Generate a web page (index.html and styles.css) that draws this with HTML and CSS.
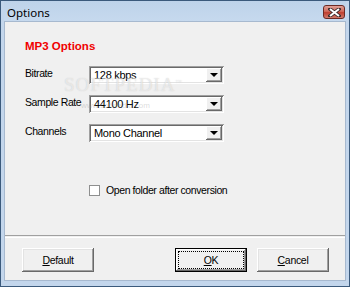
FILE: index.html
```html
<!DOCTYPE html>
<html lang="en">
<head>
    <meta charset="UTF-8">
    <meta name="viewport" content="width=device-width, initial-scale=1.0">
    <title>Options</title>
    <link rel="stylesheet" href="styles.css">
</head>
<body>
    <div class="window">
        <div class="titlebar">
            <span class="title">Options</span>
            <button class="close-btn" aria-label="Close">
                <svg width="13" height="9" viewBox="0 0 13 9">
                    <path d="M2 1 L11 8 M11 1 L2 8" stroke="#3a2a2a" stroke-width="3.6" stroke-linecap="square"/>
                    <path d="M2 1 L11 8 M11 1 L2 8" stroke="#fff" stroke-width="2"/>
                </svg>
            </button>
        </div>

        <div class="client">
            <!-- filigrane du site de capture -->
            <div class="watermark">SOFTPEDIA<sup>™</sup></div>
            <div class="watermark-url">www.softpedia.com</div>

            <h1>MP3 Options</h1>

            <div class="field-row">
                <span class="field-label">Bitrate</span>
                <div class="combo"><span class="combo-value">128 kbps</span><span class="combo-btn"></span></div>
            </div>
            <div class="field-row">
                <span class="field-label">Sample Rate</span>
                <div class="combo"><span class="combo-value">44100 Hz</span><span class="combo-btn"></span></div>
            </div>
            <div class="field-row">
                <span class="field-label">Channels</span>
                <div class="combo"><span class="combo-value">Mono Channel</span><span class="combo-btn"></span></div>
            </div>

            <label class="check-row">
                <span class="checkbox"></span>
                Open folder after conversion
            </label>

            <div class="separator"></div>

            <div class="button-row">
                <button class="btn"><u>D</u>efault</button>
                <span class="spacer"></span>
                <button class="btn btn-default"><span class="focus-rect"><u>O</u>K</span></button>
                <button class="btn"><u>C</u>ancel</button>
            </div>
        </div>
    </div>
</body>
</html>
```

FILE: styles.css
```css
body {
    margin: 0;
    width: 350px;
    height: 287px;
    overflow: hidden;
    font-family: 'Liberation Sans', Arial, sans-serif;
    font-size: 10.5px;
    letter-spacing: -0.4px;
    color: #000;
}
.window {
    width: 350px;
    height: 287px;
    box-sizing: border-box;
    border: 1px solid #3b5a7c;
    background: #c3d6ec;
    padding: 0 3px 5px 3px;
    display: flex;
    flex-direction: column;
}
.titlebar {
    height: 20px;
    display: flex;
    align-items: center;
    justify-content: space-between;
    background: linear-gradient(#bed3ea, #c6d9ee);
}
.title {
    font-family: 'Noto Sans', 'DejaVu Sans', sans-serif;
    font-size: 11.5px;
    letter-spacing: 0;
    color: #000;
    padding-left: 3px;
    margin-top: 2px;
}
.close-btn {
    width: 22px;
    height: 14px;
    margin: 2px 1px 0 0;
    padding: 0;
    border: 1px solid #6d2a24;
    border-radius: 3px;
    background: linear-gradient(#e0a197 0%, #d0685a 45%, #bf3f30 55%, #d07a6c 100%);
    display: flex;
    align-items: center;
    justify-content: center;
}
.client {
    flex: 1;
    position: relative;
    background: #f0f0f0;
    border: 1px solid #a7b9cf;
    padding: 17px 0 0 0;
    display: flex;
    flex-direction: column;
}
h1 {
    margin: 0 0 0 20px;
    color: #f00000;
    font-size: 11.5px;
    font-weight: bold;
    letter-spacing: 0;
    line-height: 14px;
}
.field-row {
    display: flex;
    align-items: center;
    margin: 13px 0 0 20px;
    height: 17px;
}
.field-row + .field-row {
    margin-top: 12px;
}
.field-label {
    width: 64px;
    margin-top: -3px;
    white-space: nowrap;
}
.combo {
    width: 135px;
    height: 18px;
    box-sizing: border-box;
    background: #fff;
    box-shadow: inset 1px 1px #a0a0a0, inset -1px -1px #fff, inset 2px 2px #696969, inset -2px -2px #e3e3e3;
    display: flex;
    align-items: center;
    padding: 2px;
}
.combo-value {
    flex: 1;
    padding-left: 3px;
    font-size: 11px;
    letter-spacing: -0.3px;
}
.combo-btn {
    width: 16px;
    height: 14px;
    box-sizing: border-box;
    background: #f0f0f0;
    box-shadow: inset -1px -1px #696969, inset 1px 1px #fff, inset -2px -2px #a0a0a0;
    display: flex;
    align-items: center;
    justify-content: center;
}
.combo-btn::after {
    content: "";
    border-left: 4px solid transparent;
    border-right: 4px solid transparent;
    border-top: 4px solid #000;
    margin: 1px 1px 0 0;
}
.check-row {
    display: flex;
    align-items: center;
    gap: 6px;
    margin: 43px 0 0 84px;
    height: 12px;
}
.checkbox {
    width: 11px;
    height: 11px;
    box-sizing: border-box;
    background: #fff;
    border: 1px solid #8e8f8f;
}
.separator {
    margin-top: 39px;
    height: 1px;
    border-top: 1px solid #a0a0a0;
    border-bottom: 1px solid #fff;
}
.button-row {
    display: flex;
    margin: 10px 16px 0 17px;
    gap: 10px;
}
.spacer {
    flex: 1;
}
.btn {
    width: 72px;
    height: 24px;
    padding: 0;
    border: none;
    background: #f0f0f0;
    font-family: 'Liberation Sans', Arial, sans-serif;
    font-size: 10.5px;
    letter-spacing: -0.3px;
    color: #000;
    box-shadow: inset -1px -1px #696969, inset 1px 1px #fff, inset -2px -2px #a0a0a0, inset 2px 2px #e3e3e3;
}
.btn-default {
    box-shadow: inset 0 0 0 1px #000, inset -2px -2px #696969, inset 2px 2px #fff, inset -3px -3px #a0a0a0;
    display: flex;
    padding: 4px;
}
.focus-rect {
    flex: 1;
    display: flex;
    align-items: center;
    justify-content: center;
    outline: 1px dotted #000;
}
.watermark {
    position: absolute;
    left: 59px;
    top: 52px;
    font-family: 'Liberation Serif', serif;
    font-size: 19px;
    letter-spacing: 1px;
    color: rgba(255, 255, 255, 0.55);
    text-shadow: 0 0 1px rgba(120, 120, 120, 0.35);
    pointer-events: none;
}
.watermark sup {
    font-size: 6px;
}
.watermark-url {
    position: absolute;
    left: 76px;
    top: 79px;
    font-size: 8px;
    letter-spacing: 0;
    color: rgba(150, 150, 150, 0.35);
    pointer-events: none;
}
```
